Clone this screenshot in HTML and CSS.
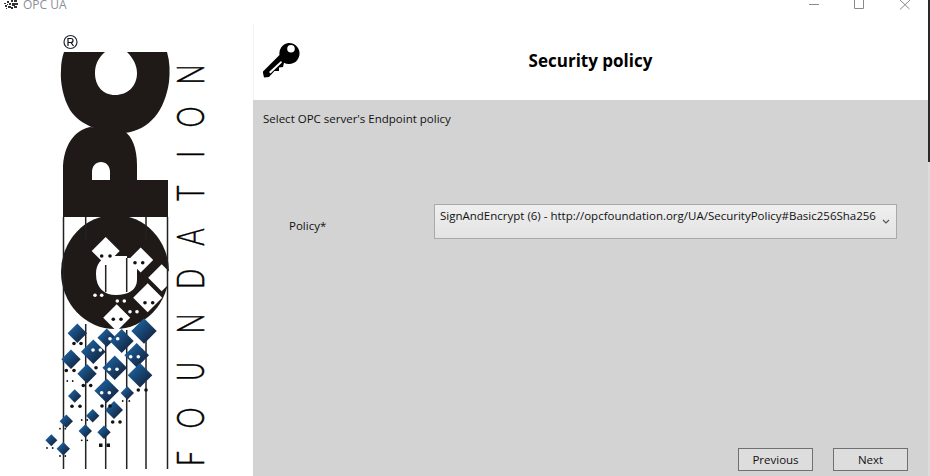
FILE: index.html
```html
<!DOCTYPE html>
<html lang="en">
<head>
<meta charset="utf-8">
<title>OPC UA</title>
<link rel="stylesheet" href="styles.css">
</head>
<body>
<div class="shell">
<div class="window">
  <div class="titlebar">
    <svg class="app-icon" width="14" height="9" viewBox="0 0 14 9">
      <path d="M0 3h2v1H0zM1 5h2v2H1zM3 1h2v2H3zM3 4h1v1H3zM4 6h3v2H4zM5 3h2v2H5zM7 0h2v2H7zM8 3h3v3H8zM7 7h2v2H7zM10 0h3v2h-3zM11 3h3v2h-3zM10 6h3v2h-3zM2 8h1v1H2z" fill="#333"/>
    </svg>
    <span class="app-name">OPC UA</span>
    <div class="win-controls">
      <svg class="win-ctl" width="110" height="12" viewBox="0 0 110 12">
        <path d="M0 4.500H10" stroke="#8a8a8a" fill="none"/>
        <path d="M45.500 0V8.500H54.500V0" stroke="#8a8a8a" fill="none"/>
        <path d="M91 0L100.500 9M101 0L91 9.500" stroke="#8a8a8a" fill="none"/>
      </svg>
    </div>
  </div>
  <div class="content">
    <aside class="side">
      <svg class="logo" width="253" height="452" viewBox="0 24 253 452">
        <defs>
          <linearGradient id="blue" x1="0" y1="0" x2="1" y2="1">
            <stop offset="0.15" stop-color="#1b639f"/>
            <stop offset="0.85" stop-color="#14233f"/>
          </linearGradient>
          <polygon id="dm" points="0,-1 1,0 0,1 -1,0"/>
        </defs>
        <circle cx="70.500" cy="42" r="6.500" fill="#fff" stroke="#1c2a3a" stroke-width="1.200"/>
        <path class="reg" d="M68 46V38.500h3a2 2 0 0 1 0 4h-3M71 42.500L73.500 46" fill="none" stroke="#111" stroke-width="1.200"/>
        <g fill="#1f1a17">
          <path d="M64 52H105C98 58 95 65 95 73C95 86 103 95 115 95C128 95 137 86 137 73C137 65 133 58 127 52H167C170 62 170 72 169 82C165 110 150 130 125 133C100 133 80 125 70 110C63 98 60 82 61 70C61 63 62 58 64 52Z"/>
          <path d="M90 127C75 130 63 145 63 170V217H168V180H137V165C137 148 132 136 124 131Z"/>
          <ellipse cx="115" cy="272" rx="54" ry="57"/>
        </g>
        <path d="M92 180V172C92 166 96 162 101 162C106 162 110 166 110 172V180Z" fill="#fff"/>
        <g class="u-shape" fill="#fff">
          <path d="M96 274C96 264 101 258 110 256H127V258H137V280C137 290 128 295 116 295C104 295 96 288 96 274Z"/>
          <use href="#dm" transform="translate(105.700 251) scale(14)"/>
          <use href="#dm" transform="translate(140.700 260) scale(12.500)"/>
          <use href="#dm" transform="translate(161.700 277.700) scale(13.500)"/>
          <use href="#dm" transform="translate(147.700 297.700) scale(14.500)"/>
          <use href="#dm" transform="translate(116.700 317.700) scale(13.500)"/>
        </g>
        <g stroke="#222" stroke-width="1.500" fill="none">
          <path d="M63.500 217V469M85.700 217V240M85.700 324V469M105.700 265V292M105.700 330V469M126.700 258V292M126.700 330V469M146 217V240M146 324V469M167.500 217V469"/>
        </g>
        <g fill="url(#blue)">
          <use href="#dm" transform="translate(77.300 333.300) scale(9.700)"/>
          <use href="#dm" transform="translate(106.700 337.700) scale(9.300)"/>
          <use href="#dm" transform="translate(121.700 341) scale(12)"/>
          <use href="#dm" transform="translate(144 331) scale(12.700)"/>
          <use href="#dm" transform="translate(93.300 351.700) scale(12.300)"/>
          <use href="#dm" transform="translate(71 359.300) scale(9.700)"/>
          <use href="#dm" transform="translate(136.700 355.300) scale(12.300)"/>
          <use href="#dm" transform="translate(114.700 367.700) scale(12.300)"/>
          <use href="#dm" transform="translate(87 373.700) scale(9.700)"/>
          <use href="#dm" transform="translate(140 375.300) scale(12.300)"/>
          <use href="#dm" transform="translate(106.700 390.700) scale(12.300)"/>
          <use href="#dm" transform="translate(127.300 393) scale(6.700)"/>
          <use href="#dm" transform="translate(74.700 396) scale(6.700)"/>
          <use href="#dm" transform="translate(114 410) scale(9)"/>
          <use href="#dm" transform="translate(92.700 415.700) scale(6.700)"/>
          <use href="#dm" transform="translate(66.300 421.300) scale(6.700)"/>
          <use href="#dm" transform="translate(85.300 431) scale(6.700)"/>
          <use href="#dm" transform="translate(104 432.300) scale(6.700)"/>
          <use href="#dm" transform="translate(51.300 440.300) scale(6)"/>
          <use href="#dm" transform="translate(63.300 448.700) scale(6.700)"/>
        </g>
        <g fill="#111">
          <circle cx="74" cy="343.500" r="1.800"/><circle cx="81" cy="343.500" r="1.800"/>
          <circle cx="66.300" cy="370.500" r="1.800"/><circle cx="74" cy="370.500" r="1.800"/>
          <circle cx="67.300" cy="381" r="0.900"/><circle cx="72.700" cy="381" r="0.900"/>
          <circle cx="83.300" cy="385.500" r="1.800"/><circle cx="90.700" cy="385.500" r="1.800"/>
          <circle cx="96" cy="367.700" r="1.800"/>
          <circle cx="102" cy="406" r="1.800"/><circle cx="110" cy="406" r="1.800"/>
          <circle cx="72" cy="406.300" r="1.800"/><circle cx="80" cy="406.300" r="1.800"/>
          <circle cx="122.700" cy="401" r="0.900"/><circle cx="129.300" cy="401" r="0.900"/>
          <circle cx="138.300" cy="390" r="1.800"/><circle cx="146" cy="390" r="1.800"/>
          <circle cx="112.700" cy="422" r="1.800"/><circle cx="120" cy="422" r="1.800"/>
          <circle cx="81.700" cy="420" r="0.900"/><circle cx="87.300" cy="420" r="0.900"/>
          <circle cx="60" cy="428.700" r="0.900"/><circle cx="65.300" cy="428.700" r="0.900"/>
          <circle cx="81.700" cy="440.300" r="0.900"/><circle cx="87.300" cy="440.300" r="0.900"/>
          <rect x="99" y="443.500" width="3.500" height="3.500"/><rect x="106.500" y="443.500" width="3.500" height="3.500"/>
          <circle cx="47" cy="448" r="0.900"/><circle cx="52.700" cy="448" r="0.900"/>
          <circle cx="60" cy="456" r="0.900"/><circle cx="65.300" cy="456" r="0.900"/>
          <circle cx="101.700" cy="256" r="1.800"/><circle cx="110" cy="256" r="1.800"/>
          <circle cx="135" cy="262.700" r="1.800"/><circle cx="142.700" cy="262.700" r="1.800"/>
          <circle cx="145" cy="302.700" r="1.800"/><circle cx="152.700" cy="302.700" r="1.800"/>
          <circle cx="113.300" cy="319.300" r="1.800"/><circle cx="121" cy="319.300" r="1.800"/>
        </g>
        <g fill="#fff">
          <circle cx="95" cy="295.300" r="1.800"/><circle cx="101.700" cy="295.300" r="1.800"/>
          <circle cx="117.300" cy="301" r="1.800"/><circle cx="124.300" cy="301" r="1.800"/>
          <circle cx="130" cy="311.700" r="1.800"/><circle cx="137" cy="311.700" r="1.800"/>
          <circle cx="110" cy="338.700" r="1.800"/><circle cx="117.700" cy="338.700" r="1.800"/>
          <circle cx="93" cy="350" r="1.800"/><circle cx="100.300" cy="350" r="1.800"/>
          <circle cx="130.700" cy="356.700" r="1.800"/><circle cx="138.300" cy="356.700" r="1.800"/>
          <circle cx="109.300" cy="369.300" r="1.800"/><circle cx="117" cy="369.300" r="1.800"/>
          <circle cx="101.700" cy="392.700" r="1.800"/><circle cx="109.300" cy="392.700" r="1.800"/>
        </g>
        <text class="foundation" transform="translate(204 466) rotate(-90) scale(0.72 1)" x="0 52 118 184 246 306 368 428 470 530">FOUNDATION</text>
      </svg>
    </aside>
    <main class="panel">
      <header class="panel-head">
        <svg class="key" width="40" height="40" viewBox="0 0 40 40">
          <path fill-rule="evenodd" d="M26.500 3A10.500 10.500 0 1 1 22 22.700L21 27L17 27.500L17 31L12.500 31L7 37L2 37.500L1 33V31.500L17.500 15A10.500 10.500 0 0 1 26.500 3ZM29 5A3.800 3.800 0 1 0 29 12.600A3.800 3.800 0 1 0 29 5ZM7 32L19 21L20 22.500L8.500 33.500Z" fill="#000"/>
        </svg>
        <h1 class="panel-title">Security policy</h1>
      </header>
      <section class="panel-body">
        <p class="hint">Select OPC server's Endpoint policy</p>
        <div class="form-row">
          <label class="field-label">Policy*</label>
          <div class="combo">
            <span class="combo-text">SignAndEncrypt (6) - http://opcfoundation.org/UA/SecurityPolicy#Basic256Sha256</span>
            <svg class="chevron" width="8" height="5" viewBox="0 0 8 5"><path d="M1 1L4 4L7 1" fill="none" stroke="#555" stroke-width="1.200"/></svg>
          </div>
        </div>
        <div class="actions">
          <button class="btn">Previous</button>
          <button class="btn">Next</button>
        </div>
      </section>
    </main>
  </div>
</div>
<div class="edge"></div>
</div>
</body>
</html>
```
FILE: styles.css
```css
* { box-sizing: border-box; }
html, body { margin: 0; padding: 0; }
body {
  width: 930px;
  height: 476px;
  overflow: hidden;
  background: #fff;
  font-family: "Open Sans", "Noto Sans", sans-serif;
  font-size: 12px;
  color: #111;
}
.shell { display: flex; height: 476px; }
.window { flex: 1; min-width: 0; display: flex; flex-direction: column; }
.edge {
  width: 2px;
  flex: none;
  background: linear-gradient(#2a2a2a 162px, #dcdcdc 162px);
}
.titlebar {
  display: flex;
  align-items: flex-start;
  height: 24px;
  padding-left: 4px;
  flex: none;
  overflow: hidden;
}
.app-icon { flex: none; }
.app-name {
  margin: -4px 0 0 5px;
  font-size: 12px;
  line-height: 18px;
  color: #8a8f98;
}
.win-controls { margin-left: auto; padding-right: 9px; }
.win-ctl { display: block; }
.content { display: flex; flex: 1; min-height: 0; }
.side { width: 253px; flex: none; }
.logo { display: block; }
.foundation {
  font-family: Lato, "Liberation Sans", sans-serif;
  font-weight: 300;
  font-size: 37px;
  fill: #000;
  stroke: #000;
  stroke-width: 0.5px;
}
.panel { flex: 1; display: flex; flex-direction: column; min-width: 0; }
.panel-head {
  height: 76px;
  flex: none;
  display: flex;
  align-items: center;
  padding-left: 8px;
  border-left: 1px solid #f4f4f4;
}
.key { flex: none; margin-top: -4px; }
.panel-title {
  flex: 1;
  margin: -3px 0 0;
  padding-right: 49px;
  text-align: center;
  font-size: 17px;
  font-weight: 700;
  color: #000;
}
.panel-body {
  flex: 1;
  background: #d3d3d3;
  display: flex;
  flex-direction: column;
  padding: 10px 20px 5px 10px;
}
.hint { margin: 0; line-height: 18px; font-size: 11.500px; }
.form-row {
  display: flex;
  align-items: flex-start;
  margin-top: 76px;
  padding-left: 26px;
}
.field-label {
  width: 145px;
  flex: none;
  margin-top: 13px;
  line-height: 18px;
  font-size: 11.500px;
}
.combo {
  width: 463px;
  height: 35px;
  flex: none;
  display: flex;
  align-items: flex-start;
  justify-content: space-between;
  padding: 2px 6px 0 5px;
  border: 1px solid #a9a9a9;
  background: linear-gradient(#efefef, #e3e3e3);
}
.combo-text { font-size: 11.500px; line-height: 18px; white-space: nowrap; }
.chevron { margin-top: 12px; flex: none; }
.actions {
  margin-top: auto;
  display: flex;
  justify-content: flex-end;
  gap: 20px;
}
.btn {
  width: 75px;
  height: 23px;
  padding: 0 0 1px;
  border: 1px solid #707070;
  background: #dddddd;
  font: inherit;
  font-size: 11.500px;
  color: #111;
}
```
